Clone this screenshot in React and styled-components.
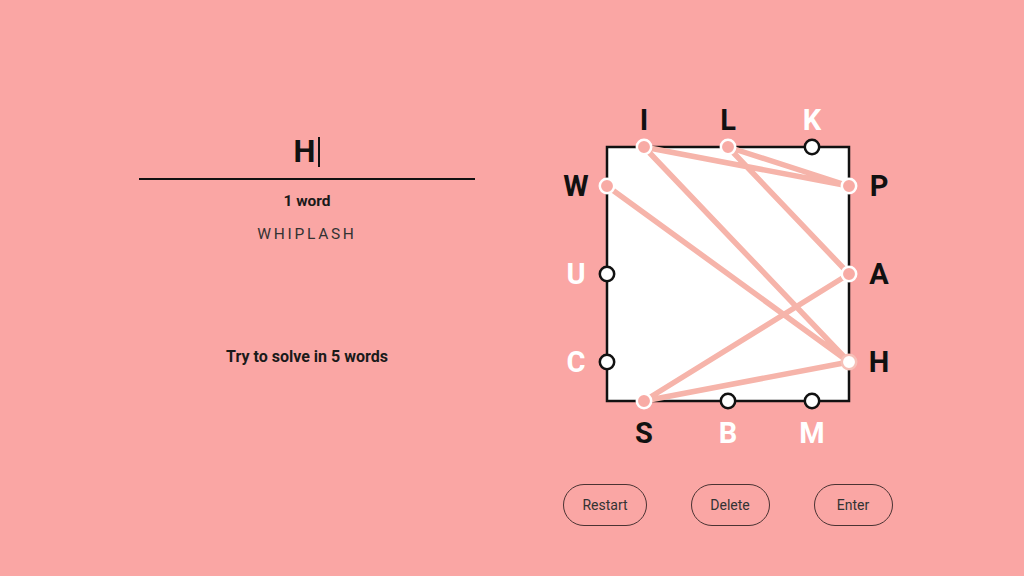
import styled, { createGlobalStyle } from "styled-components";

const GlobalStyle = createGlobalStyle`
  html, body {
    margin: 0;
    padding: 0;
    background: #faa6a4;
  }
  body {
    font-family: Roboto, "Liberation Sans", Arial, sans-serif;
    color: #1a1a1a;
  }
`;

// board geometry, svg coords (svg sits at page x 538, y 90)
const BOX = { x1: 69, y1: 57, x2: 311, y2: 311 };

const letters = [
  // top
  { ch: "I", x: 106, y: 57, side: "top", used: true },
  { ch: "L", x: 190, y: 57, side: "top", used: true },
  { ch: "K", x: 274, y: 57, side: "top", used: false },
  // left
  { ch: "W", x: 69, y: 96, side: "left", used: true },
  { ch: "U", x: 69, y: 184, side: "left", used: false },
  { ch: "C", x: 69, y: 272, side: "left", used: false },
  // right
  { ch: "P", x: 311, y: 96, side: "right", used: true },
  { ch: "A", x: 311, y: 184, side: "right", used: true },
  { ch: "H", x: 311, y: 272, side: "right", used: true, current: true },
  // bottom
  { ch: "S", x: 106, y: 311, side: "bottom", used: true },
  { ch: "B", x: 190, y: 311, side: "bottom", used: false },
  { ch: "M", x: 274, y: 311, side: "bottom", used: false },
];

const path = ["W", "H", "I", "P", "L", "A", "S", "H"];

const labelPos = (l) => {
  if (l.side === "top") return { x: l.x, y: l.y - 17 };
  if (l.side === "bottom") return { x: l.x, y: l.y + 42 };
  if (l.side === "left") return { x: l.x - 31, y: l.y + 10 };
  return { x: l.x + 30, y: l.y + 10 };
};

const App = () => {
  const find = (ch) => letters.find((l) => l.ch === ch);
  const points = path.map((ch) => `${find(ch).x},${find(ch).y}`).join(" ");

  return (
    <>
      <GlobalStyle />
      <Page>
        {/* left side: typed word + progress */}
        <LeftPanel>
          <InputRow>
            H<Caret />
          </InputRow>
          <WordCount>1 word</WordCount>
          <WordList>WHIPLASH</WordList>
          <Hint>Try to solve in 5 words</Hint>
        </LeftPanel>

        {/* right side: the board */}
        <RightPanel>
          <Board width="380" height="360" viewBox="0 0 380 360">
            <rect
              x={BOX.x1}
              y={BOX.y1}
              width={BOX.x2 - BOX.x1}
              height={BOX.y2 - BOX.y1}
              fill="#fff"
              stroke="#111"
              strokeWidth="2.5"
            />
            <polyline
              points={points}
              fill="none"
              stroke="#f6b4aa"
              strokeWidth="5.5"
              strokeLinejoin="round"
              strokeLinecap="round"
            />
            {letters.map((l) => (
              <circle
                key={"d" + l.ch}
                cx={l.x}
                cy={l.y}
                r="7.2"
                fill={l.current ? "#fff" : l.used ? "#f8aba5" : "#fff"}
                stroke={l.current ? "#f6c0b8" : l.used ? "#fff" : "#111"}
                strokeWidth="2.5"
              />
            ))}
            {letters.map((l) => {
              const p = labelPos(l);
              return (
                <Letter
                  key={"t" + l.ch}
                  x={p.x}
                  y={p.y}
                  textAnchor="middle"
                  $used={l.used}
                >
                  {l.ch}
                </Letter>
              );
            })}
          </Board>
          <ButtonRow>
            <PillButton>Restart</PillButton>
            <PillButton>Delete</PillButton>
            <PillButton>Enter</PillButton>
          </ButtonRow>
        </RightPanel>
      </Page>
    </>
  );
};

const Page = styled.div`
  width: 1024px;
  height: 576px;
  display: flex;
  align-items: flex-start;
  gap: 63px;
  padding: 90px 0 0 139px;
  box-sizing: border-box;
  overflow: hidden;
`;

const LeftPanel = styled.div`
  width: 336px;
  padding-top: 42px;
  display: flex;
  flex-direction: column;
  align-items: center;
`;

const InputRow = styled.div`
  width: 100%;
  height: 46px;
  line-height: 40px;
  border-bottom: 2px solid #111;
  display: flex;
  justify-content: center;
  align-items: flex-start;
  font-size: 31px;
  font-weight: 700;
  color: #111;
`;

const Caret = styled.span`
  display: inline-block;
  width: 2px;
  height: 30px;
  margin: 5px 0 0 3px;
  background: #111;
`;

const WordCount = styled.div`
  margin-top: 11px;
  font-size: 15.5px;
  line-height: 20px;
  font-weight: 700;
  color: #1a1a1a;
`;

const WordList = styled.div`
  margin-top: 13px;
  font-size: 15.5px;
  line-height: 20px;
  letter-spacing: 2.7px;
  color: #333;
`;

const Hint = styled.div`
  margin-top: 103px;
  font-size: 16px;
  line-height: 20px;
  font-weight: 700;
  color: #1a1a1a;
`;

const RightPanel = styled.div`
  width: 380px;
  display: flex;
  flex-direction: column;
  align-items: center;
`;

const Board = styled.svg`
  display: block;
`;

const Letter = styled.text`
  font-family: Roboto, "Liberation Sans", Arial, sans-serif;
  font-size: 29px;
  font-weight: 700;
  fill: ${(p) => (p.$used ? "#111" : "#fff")};
`;

const ButtonRow = styled.div`
  margin-top: 34px;
  display: flex;
  gap: 44px;
`;

const PillButton = styled.button`
  height: 42px;
  min-width: 79px;
  padding: 0 18px;
  border: 1px solid #4a3333;
  border-radius: 21px;
  background: transparent;
  font-family: Roboto, "Liberation Sans", Arial, sans-serif;
  font-size: 14px;
  color: #333;
  cursor: pointer;
`;

export default App;
